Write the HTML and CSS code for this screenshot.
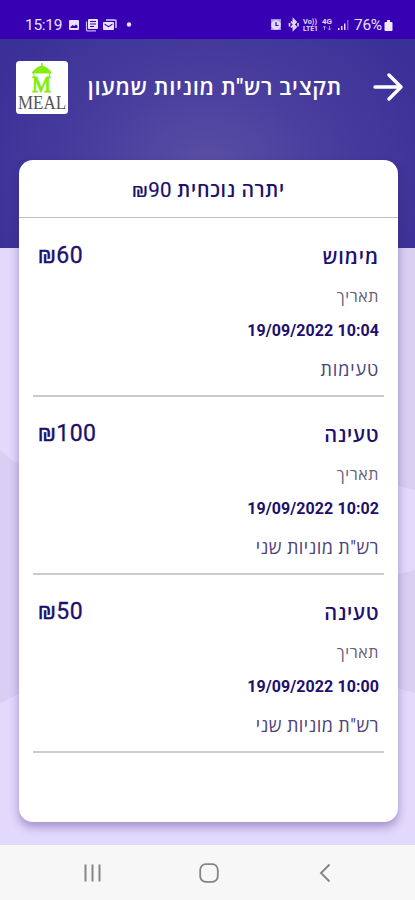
FILE: index.html
```html
<!DOCTYPE html>
<html lang="he" dir="rtl">
<head>
<meta charset="utf-8">
<meta name="viewport" content="width=device-width, initial-scale=1">
<title>תקציב רש"ת מוניות שמעון</title>
<link rel="stylesheet" href="styles.css">
</head>
<body>
<div class="status" dir="ltr">
  <span class="clock">15:19</span>
  <svg class="notices" width="66" height="16" viewBox="0 0 66 16" fill="#e9e0ff">
    <path fill-rule="evenodd" d="M2 3h8q1 0 1 1v8q0 1-1 1H2q-1 0-1-1V4q0-1 1-1zM2.500 11h7V9L8 7.500 6 9 4.500 8 2.500 10z"/>
    <path fill-rule="evenodd" d="M21 2h8q1 0 1 1v8q0 1-1 1h-8q-1 0-1-1V3q0-1 1-1zM22 4v1h6V4zm0 2.500v1h6v-1zM22 9v1h4V9z"/>
    <path d="M18.500 4.500V13q0 .8.800.8H28" fill="none" stroke="#c9b6f5" stroke-width="1.200"/>
    <path fill-rule="evenodd" d="M36 5h9q1 0 1 1v6q0 1-1 1h-9q-1 0-1-1V6q0-1 1-1zM36.500 6.500v1.200l4 2.600 4-2.600V6.500l-4 2.500z"/>
    <path d="M38 3h9q1 0 1 1v7" fill="none" stroke="#d8caff" stroke-width="1.500"/>
    <circle cx="61" cy="7.500" r="2.200"/>
  </svg>
  <span class="spacer"></span>
  <svg class="signals" width="80" height="16" viewBox="0 0 80 16" fill="#e3d8ff">
    <path d="M1 2h10v11H1z" opacity=".65"/>
    <circle cx="6" cy="8" r="4.800"/>
    <path d="M6 5v3.500h2.500" fill="none" stroke="#3700b3" stroke-width="1.200"/>
    <path d="M21 4.500l5 5.500L23.500 12.500v-10L26 5l-5 5.500" fill="none" stroke="#e3d8ff" stroke-width="1.800"/>
    <path d="M19.500 6v3.500M28 6v3.500" stroke="#e3d8ff" stroke-width="1.600"/>
    <text x="33" y="7" class="tiny" textLength="14" lengthAdjust="spacingAndGlyphs">Vo))</text>
    <text x="33" y="14" class="tiny" textLength="15" lengthAdjust="spacingAndGlyphs">LTE1</text>
    <text x="52" y="7" class="tiny" textLength="10" lengthAdjust="spacingAndGlyphs">4G</text>
    <path d="M54.500 13V9m-1.500 1.500L54.500 9 56 10.500M59.500 9v4m-1.500-1.500l1.500 1.500L61 11.500" fill="none" stroke="#a68de0" stroke-width="1"/>
    <path d="M68 11h1.500v2H68zM71 9h1.500v4H71zM74 6.500h1.500V13H74z"/>
    <path d="M77 3h1.500v10H77z" opacity=".4"/>
  </svg>
  <span class="percent">76%</span>
  <svg class="battery" width="9" height="14" viewBox="0 0 9 14"><path d="M3 2h3v2h1.500q1 0 1 1v7q0 1-1 1h-6q-1 0-1-1V5q0-1 1-1H3z" fill="#efe8ff"/></svg>
</div>
<main class="app">
  <svg class="backdrop" width="415" height="806" viewBox="0 0 415 806" fill="#d8cff2">
    <path d="M0 411l14 12h60v210L19 655 0 664z"/>
    <path d="M415 209h-70v225l48 12 22 5z"/>
    <path d="M415 531l-22 5-48 20v70l48 22 22 6z"/>
  </svg>
  <header class="bar">
    <svg class="back" width="30" height="30" viewBox="0 0 30 30" fill="none" stroke="#fff" stroke-width="3.400" stroke-linecap="round" stroke-linejoin="round"><path d="M2 15h25M16 3l12 12-12 12"/></svg>
    <h1>תקציב רש"ת מוניות שמעון</h1>
    <svg class="logo" width="52" height="53" viewBox="0 0 52 53" direction="ltr">
      <rect width="52" height="53" rx="3.500" fill="#fff"/>
      <path d="M16 12.500q0-2 2.500-4 3-3 6.500-3.700V2h1.600v2.800q3.500.7 6.500 3.700 2.500 2 2.500 4z" fill="#83ed10"/>
      <path d="M17.500 12l1 5M34 12l-1 5" stroke="#83ed10"/>
      <text x="16" y="30.500" class="logo-m" textLength="19" lengthAdjust="spacingAndGlyphs">M</text>
      <text x="2" y="48" class="logo-name" textLength="48" lengthAdjust="spacingAndGlyphs">MEAL</text>
    </svg>
  </header>
  <section class="card">
    <h2>יתרה נוכחית <span>₪90</span></h2>
    <ul>
      <li>
        <div class="top"><b class="use">מימוש</b><span>₪60</span></div>
        <div class="label">תאריך</div>
        <time dir="ltr">19/09/2022 10:04</time>
        <p class="short">טעימות</p>
      </li>
      <li>
        <div class="top"><b>טעינה</b><span>₪100</span></div>
        <div class="label">תאריך</div>
        <time dir="ltr">19/09/2022 10:02</time>
        <p>רש"ת מוניות שני</p>
      </li>
      <li>
        <div class="top"><b>טעינה</b><span>₪50</span></div>
        <div class="label">תאריך</div>
        <time dir="ltr">19/09/2022 10:00</time>
        <p>רש"ת מוניות שני</p>
      </li>
    </ul>
  </section>
</main>
<nav dir="ltr">
  <svg width="20" height="20" viewBox="0 0 20 20" stroke="#858585" stroke-width="2"><path d="M2.500 1.500v17M9.500 1.500v17M16.500 1.500v17"/></svg>
  <svg width="20" height="20" viewBox="0 0 20 20" fill="none" stroke="#858585" stroke-width="1.800"><rect x="1.200" y="1.200" width="17.600" height="17.600" rx="5.500"/></svg>
  <svg width="20" height="20" viewBox="0 0 20 20" fill="none" stroke="#858585" stroke-width="1.900"><path d="M14.500 1.500L6 10l8.500 8.500"/></svg>
</nav>
</body>
</html>
```
FILE: styles.css
```css
* { box-sizing: border-box; margin: 0; padding: 0; }
body {
  width: 415px;
  height: 900px;
  display: flex;
  flex-direction: column;
  overflow: hidden;
  font-family: Roboto, "Open Sans", sans-serif;
  color: #20106d;
}
svg { display: block; flex: none; }
.status {
  height: 39px;
  padding: 10px 22px 0 25px;
  display: flex;
  align-items: center;
  background: #3700b3;
  color: #e9e0ff;
}
.clock { width: 43px; font-size: 15.5px; letter-spacing: -.3px; }
.spacer { flex: 1; }
.signals { margin-right: 4px; }
.percent { width: 30px; font-size: 15.5px; letter-spacing: -.3px; }
.tiny { font: 700 7px Roboto, sans-serif; }
.app {
  position: relative;
  z-index: 0;
  height: 806px;
  padding: 0 17px 0 19px;
  background:
    radial-gradient(ellipse 240px 190px at 50% 130px, #5a4fa3 0%, #4a3f9e 45%, #3b3097 100%) 0 0 / 100% 209px no-repeat,
    #e2d9fc;
}
.backdrop { position: absolute; top: 0; left: 0; z-index: -1; }
.bar {
  height: 121px;
  margin-left: -3px;
  margin-right: -6px;
  padding-top: 22px;
  display: flex;
  align-items: flex-start;
}
.back { margin: 11px 1px 0 0; }
h1 {
  flex: 1;
  padding-right: 31px;
  font-size: 22px;
  font-weight: 600;
  line-height: 54px;
  letter-spacing: .7px;
  white-space: nowrap;
  color: #fff;
}
.logo { overflow: visible; }
.logo-m { font: 400 23px "Liberation Serif", serif; fill: #83ed10; stroke: #83ed10; stroke-width: 1px; }
.logo-name { font: 400 18px "Liberation Serif", serif; fill: #555; }
.card {
  height: 662px;
  background: #fff;
  border-radius: 14px;
  box-shadow: 0 5px 10px rgba(55, 30, 120, .38);
}
h2 {
  height: 58px;
  border-bottom: 1px solid #bfbfc4;
  font-size: 19.5px;
  font-weight: 600;
  line-height: 60px;
  letter-spacing: .7px;
  text-align: center;
}
h2 span { font-size: 20.5px; font-weight: 400; letter-spacing: .3px; -webkit-text-stroke: .2px; }
ul { list-style: none; padding: 1px 14px 0; }
li {
  height: 178px;
  padding: 18px 5px 0;
  border-bottom: 2px solid #cbcbce;
}
.top {
  display: flex;
  justify-content: space-between;
  line-height: 40px;
}
.top b { font-size: 20px; font-weight: 600; letter-spacing: .6px; }
.top .use { letter-spacing: .9px; }
.top span { margin-top: -1px; font-size: 23px; font-weight: 400; letter-spacing: .5px; -webkit-text-stroke: .3px; }
.label { line-height: 40px; font-size: 16px; letter-spacing: .6px; color: #686078; }
time {
  display: block;
  margin-top: -1px;
  line-height: 30px;
  text-align: right;
  font-size: 16px;
  font-weight: 700;
  letter-spacing: .07px;
}
p { margin-top: 1px; line-height: 46px; font-size: 18px; letter-spacing: .45px; color: #4c417b; }
.short { letter-spacing: .85px; }
nav {
  height: 55px;
  padding: 0 80px 0 83px;
  display: flex;
  justify-content: space-between;
  align-items: center;
  background: #f7f7f8;
}
```
